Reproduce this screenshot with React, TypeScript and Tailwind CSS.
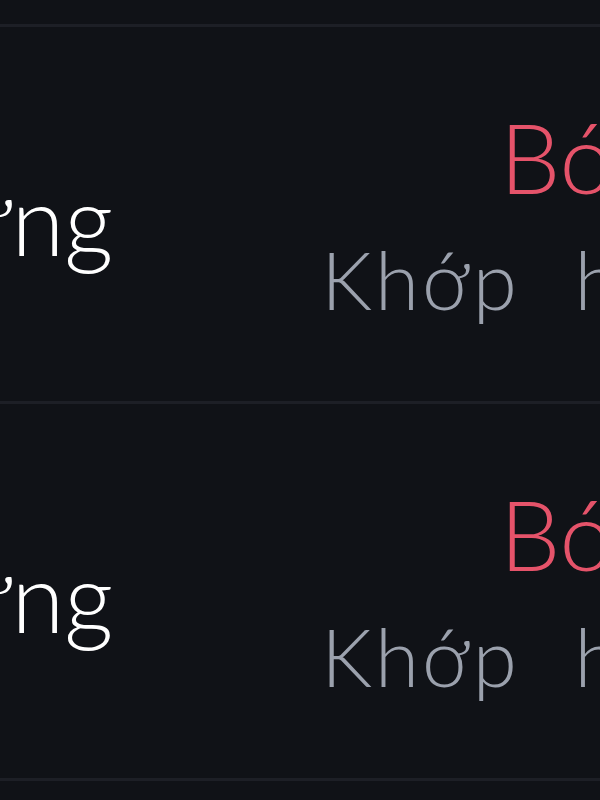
export default function App() {
  const rows = [
    { name: "Sưng", title: "Bóng", sub: "Khớp hông" },
    { name: "Sưng", title: "Bóng", sub: "Khớp hông" },
  ]

  return (
    <div className="w-[600px] h-[800px] overflow-hidden bg-[#101217] font-['Lato',sans-serif]">
      <div className="h-[24px]"></div>
      {rows.map((row, i) => (
        <div
          key={i}
          className="-ml-[106px] w-[818px] h-[377px] flex items-center justify-between border-t-[3px] border-[#1d1f26] pl-[9px] pr-[10px]"
        >
          <span className="text-white text-[96px] font-light leading-none mt-[10px] whitespace-nowrap">{row.name}</span>
          <div className="flex flex-col items-end">
            <span className="text-[#e5536a] text-[96px] font-light leading-none -mr-[13px] whitespace-nowrap">{row.title}</span>
            <span className="text-[#9ba1ad] text-[80px] font-light leading-none tracking-[3px] [word-spacing:30px] mt-[34px] -mr-[58px] whitespace-nowrap">{row.sub}</span>
          </div>
        </div>
      ))}
      <div className="border-t-[3px] border-[#1d1f26]"></div>
    </div>
  )
}
